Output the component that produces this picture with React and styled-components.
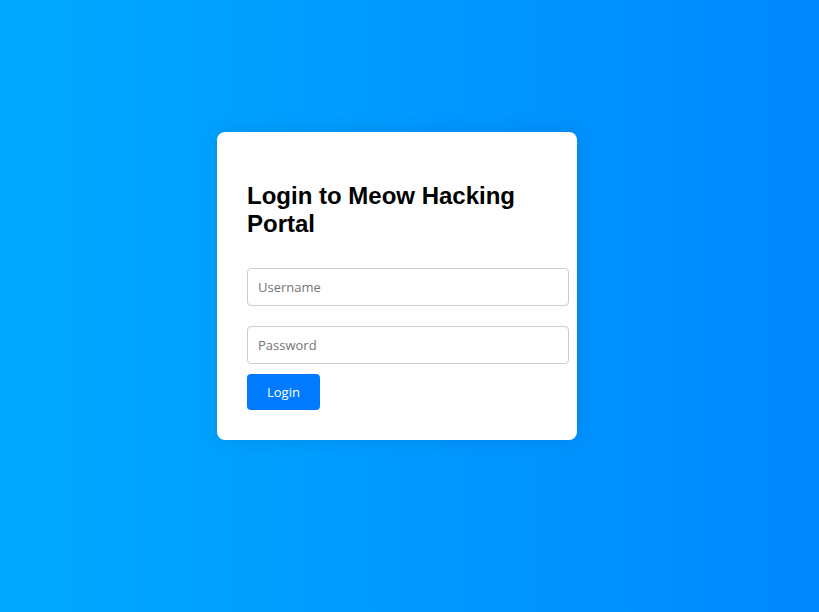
import React from "react";
import styled, { createGlobalStyle } from "styled-components";

const GlobalStyle = createGlobalStyle`
  html, body {
    margin: 0;
    padding: 0;
  }
  body {
    font-family: "Liberation Sans", Arial, sans-serif;
  }
`;

const Page = styled.div`
  box-sizing: border-box;
  width: 100%;
  height: 612px;
  padding: 0 25px 40px 0;
  display: flex;
  align-items: center;
  justify-content: center;
  background: linear-gradient(to right, #00aaff, #0088ff);
`;

const Card = styled.form`
  width: 300px;
  padding: 30px;
  background: #fff;
  border-radius: 8px;
  box-shadow: 0 0 20px rgba(0, 0, 0, 0.1);
`;

const Title = styled.h2`
  margin: 20px 0 30px;
  font-family: "Liberation Sans", Arial, sans-serif;
  font-size: 24px;
  font-weight: 700;
  color: #000;
`;

const Field = styled.input`
  display: block;
  width: 300px;
  margin: 0 0 ${(p) => p.$gap}px;
  padding: 10px;
  border: 1px solid #ccc;
  border-radius: 4px;
  font-family: "Open Sans", "Noto Sans", sans-serif;
  font-size: 13px;
  line-height: 16px;
  color: #333;
  outline: none;

  &::placeholder {
    color: #757575;
  }
`;

const Button = styled.button`
  display: block;
  padding: 10px 20px;
  border: none;
  border-radius: 4px;
  background: #007bff;
  color: #fff;
  font-family: "Open Sans", "Noto Sans", sans-serif;
  font-size: 13px;
  line-height: 16px;
  cursor: pointer;
`;

const App = () => {
  return (
    <>
      <GlobalStyle />
      <Page>
        <Card onSubmit={(e) => e.preventDefault()}>
          <Title>Login to Meow Hacking Portal</Title>
          <Field type="text" placeholder="Username" $gap={20} />
          <Field type="password" placeholder="Password" $gap={10} />
          <Button type="submit">Login</Button>
        </Card>
      </Page>
    </>
  );
};

export default App;
